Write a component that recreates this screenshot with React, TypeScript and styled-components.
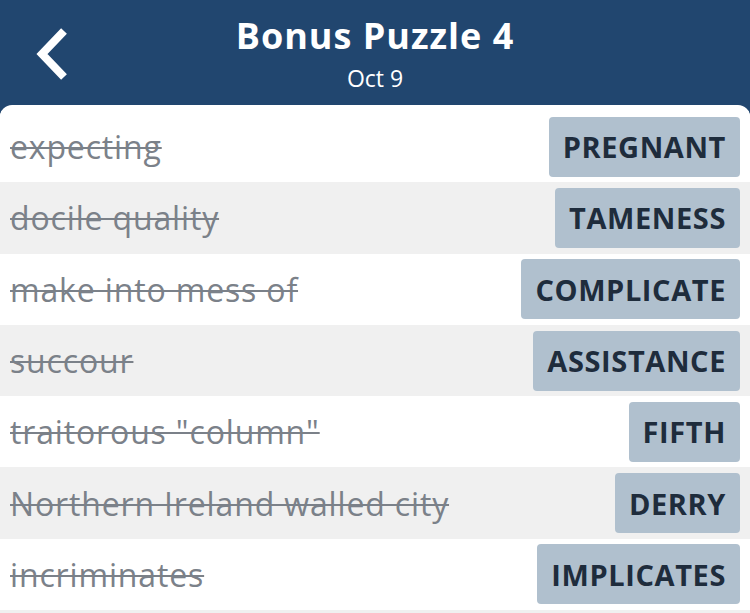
import styled, { createGlobalStyle } from "styled-components";

const GlobalStyle = createGlobalStyle`
  html, body {
    margin: 0;
    padding: 0;
    background: #21466f;
  }
  body {
    font-family: "Open Sans", "Lato", sans-serif;
    overflow: hidden;
  }
`;

const Page = styled.div`
  width: 750px;
  height: 613px;
  background: #21466f;
  display: flex;
  flex-direction: column;
  overflow: hidden;
`;

const Header = styled.header`
  height: 105px;
  display: grid;
  grid-template-columns: 120px 1fr 120px;
  align-items: center;
  color: #ffffff;
`;

const BackButton = styled.button`
  border: none;
  background: none;
  padding: 0;
  margin-left: 33px;
  width: 40px;
  height: 54px;
  display: flex;
  align-items: center;
  justify-content: center;
  cursor: pointer;
  align-self: start;
  margin-top: 27px;
`;

const TitleBlock = styled.div`
  display: flex;
  flex-direction: column;
  align-items: center;
`;

const Title = styled.h1`
  margin: 0;
  font-size: 36px;
  font-weight: 700;
  letter-spacing: 1px;
  line-height: 44px;
`;

const Subtitle = styled.div`
  font-size: 23px;
  line-height: 28px;
  margin-top: 6px;
`;

const Card = styled.main`
  flex: 1;
  background: #ffffff;
  border-radius: 12px 12px 0 0;
  padding-top: 6px;
  display: flex;
  flex-direction: column;
  overflow: hidden;
`;

const List = styled.ul`
  flex: 1;
  margin: 0;
  padding: 0;
  list-style: none;
  background: #f0f0f0;
`;

const Row = styled.li<{ $shaded: boolean }>`
  height: 71.3px;
  display: flex;
  align-items: center;
  justify-content: space-between;
  padding: 0 10px;
  background: ${(p) => (p.$shaded ? "#f0f0f0" : "#ffffff")};
`;

const Clue = styled.span`
  font-size: 32px;
  letter-spacing: 0.85px;
  color: #7b8189;
  text-decoration: line-through;
  text-decoration-thickness: 2px;
  white-space: nowrap;
`;

const Answer = styled.span`
  height: 60px;
  display: flex;
  align-items: center;
  padding: 0 14px;
  border-radius: 4px;
  background: #b0c0ce;
  color: #1e2c3c;
  font-size: 29px;
  font-weight: 700;
  letter-spacing: 0.6px;
  text-transform: uppercase;
`;

const clues = [
  { clue: "expecting", answer: "PREGNANT" },
  { clue: "docile quality", answer: "TAMENESS" },
  { clue: "make into mess of", answer: "COMPLICATE" },
  { clue: "succour", answer: "ASSISTANCE" },
  { clue: 'traitorous "column"', answer: "FIFTH" },
  { clue: "Northern Ireland walled city", answer: "DERRY" },
  { clue: "incriminates", answer: "IMPLICATES" },
];

const App = () => {
  return (
    <>
      <GlobalStyle />
      <Page>
        <Header>
          <BackButton aria-label="Back">
            <svg width="40" height="54" viewBox="0 0 40 54">
              <polyline
                points="31,4 9,27 31,50"
                fill="none"
                stroke="#ffffff"
                strokeWidth="8"
                strokeLinecap="butt"
                strokeLinejoin="miter"
              />
            </svg>
          </BackButton>
          <TitleBlock>
            <Title>Bonus Puzzle 4</Title>
            <Subtitle>Oct 9</Subtitle>
          </TitleBlock>
          <div />
        </Header>
        <Card>
          <List>
            {clues.map((c, i) => (
              <Row key={c.answer} $shaded={i % 2 === 1}>
                <Clue>{c.clue}</Clue>
                <Answer>{c.answer}</Answer>
              </Row>
            ))}
          </List>
        </Card>
      </Page>
    </>
  );
};

export default App;
